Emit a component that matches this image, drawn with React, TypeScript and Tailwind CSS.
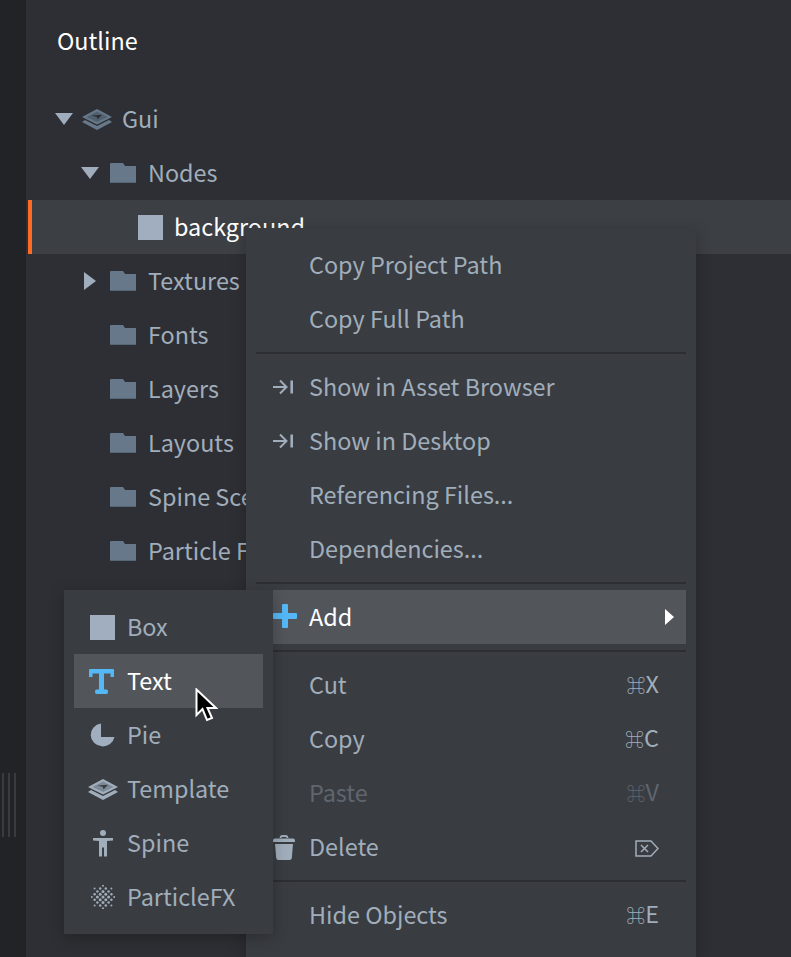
import React from "react";

const TEXT = "text-[#a0adba]";

const Layers = ({ color = "#a0aebc", dim = false }: { color?: string; dim?: boolean }) => (
  <svg width="30" height="21" viewBox="0 0 30 21" className="shrink-0">
    <path d="M15 0 L30 8 L15 15.5 L0 8 Z" fill={color} />
    <path d="M15 2.5 L25.5 8 L15 13 L4.5 8 Z" fill={dim ? "#50606f" : "#7d8997"} />
    <path d="M9.5 6.5 L20 5.8 L15.5 10.5 L14.8 8 Z" fill={dim ? "#2e2f34" : "#393c41"} />
    <path d="M3 11 L15 17 L27 11 L30 13 L15 21 L0 13 Z" fill={color} />
  </svg>
);

const Folder = () => (
  <svg width="26" height="20" viewBox="0 0 26 20" className="shrink-0">
    <path d="M0 1 Q0 0 1 0 H13 L15 3 H26 V20 H0 Z" fill="#66788a" />
    <path d="M0 19 H26 V20 H0 Z" fill="#566674" />
  </svg>
);

const Down = () => (
  <svg width="18" height="12" viewBox="0 0 18 12" className="shrink-0">
    <path d="M0 0 H18 L9 12 Z" fill="#9fadbd" />
  </svg>
);

const Right = () => (
  <svg width="12" height="18" viewBox="0 0 12 18" className="shrink-0">
    <path d="M0 0 L12 9 L0 18 Z" fill="#9fadbd" />
  </svg>
);

const ShowIn = () => (
  <svg width="20" height="16" viewBox="0 0 20 16" fill="none" stroke="#a0adba" strokeWidth="2" className="shrink-0">
    <path d="M0 8 H13 M7 1.5 L13.5 8 L7 14.5" />
    <path d="M18.7 1.5 V14.5" strokeWidth="2.6" />
  </svg>
);

const TreeRow = ({ indent, arrow, icon, label }: { indent: string; arrow?: React.ReactNode; icon: React.ReactNode; label: string }) => (
  <div className={`flex h-[54px] items-center ${indent}`}>
    <div className="flex w-[34px] shrink-0 items-center justify-center pr-[6px]">{arrow}</div>
    <div className="flex w-[26px] shrink-0 justify-center">{icon}</div>
    <span className={`mb-[2px] ml-[12px] whitespace-nowrap ${TEXT}`}>{label}</span>
  </div>
);

const Shortcut = ({ k }: { k: string }) => (
  <>
    <span className="text-[19px]">⌘</span>
    {k}
  </>
);

const MenuRow = ({
  icon,
  label,
  shortcut,
  dim,
}: {
  icon?: React.ReactNode;
  label: string;
  shortcut?: React.ReactNode;
  dim?: boolean;
}) => (
  <div className={`flex h-[54px] items-center ${dim ? "text-[#5f666e]" : TEXT}`}>
    <div className="flex w-[63px] shrink-0 items-center pl-[27px]">{icon}</div>
    <span className="mb-[2px]">{label}</span>
    <span className="mb-[2px] ml-auto pr-[37px]">{shortcut}</span>
  </div>
);

const Divider = () => <div className="mx-[10px] my-[6px] h-[2px] bg-[#2c2e32]" />;

const SubRow = ({ icon, label, active }: { icon: React.ReactNode; label: string; active?: boolean }) => (
  <div className={`mx-[10px] flex h-[54px] items-center ${active ? "bg-[#52565b] text-white" : TEXT}`}>
    <div className="flex w-[53px] shrink-0 justify-center pr-[2px] pl-[6px]">{icon}</div>
    <span className="mb-[2px]">{label}</span>
  </div>
);

const particleDots: [number, number, number][] = [];
for (let r = -4; r <= 4; r++) {
  for (let c = -4; c <= 4; c++) {
    if ((r + c + 8) % 2 !== 0) continue;
    const d = Math.hypot(r, c);
    if (d > 4.3) continue;
    particleDots.push([12 + c * 2.8, 12 + r * 2.8, d < 2.5 ? 1.5 : d < 3.3 ? 1.25 : 1]);
  }
}

export default function App() {
  return (
    <div
      className="relative flex h-[957px] w-[791px] overflow-hidden bg-[#2e2f34] text-[23.4px] leading-[52px]"
      style={{ fontFamily: '"Noto Sans CJK SC", "Noto Sans", sans-serif' }}
    >
      {/* left strip */}
      <div className="relative w-[26px] shrink-0 bg-[#212327]">
        <div className="absolute top-[773px] left-[2px] flex h-[64px] gap-[4px]">
          <div className="w-[2px] bg-[#393b40]" />
          <div className="w-[2px] bg-[#393b40]" />
          <div className="w-[2px] bg-[#393b40]" />
        </div>
      </div>

      <div className="min-w-0 flex-1">
        <div className="pt-[14px] pb-[2px] pl-[31px] text-white">Outline</div>
        <div className="mt-[24px]">
          <TreeRow indent="pl-[24px]" arrow={<Down />} icon={<Layers color="#66788a" dim />} label="Gui" />
          <TreeRow indent="pl-[50px]" arrow={<Down />} icon={<Folder />} label="Nodes" />
          <div className="ml-[2px] flex h-[54px] items-center border-l-4 border-[#ff6b23] bg-[#3c3f44] pl-[106px]">
            <div className="h-[25px] w-[25px] bg-[#a0aebf]" />
            <span className="mb-[2px] ml-[11px] text-white">background</span>
          </div>
          <TreeRow indent="pl-[50px]" arrow={<Right />} icon={<Folder />} label="Textures" />
          <TreeRow indent="pl-[50px]" icon={<Folder />} label="Fonts" />
          <TreeRow indent="pl-[50px]" icon={<Folder />} label="Layers" />
          <TreeRow indent="pl-[50px]" icon={<Folder />} label="Layouts" />
          <TreeRow indent="pl-[50px]" icon={<Folder />} label="Spine Scenes" />
          <TreeRow indent="pl-[50px]" icon={<Folder />} label="Particle FX" />
        </div>
      </div>

      {/* context menu */}
      <div className="absolute top-[228px] bottom-0 left-[246px] w-[450px] bg-[#393c41] pt-[10px] shadow-[0_4px_14px_rgba(0,0,0,0.25)]">
        <MenuRow label="Copy Project Path" />
        <MenuRow label="Copy Full Path" />
        <Divider />
        <MenuRow icon={<ShowIn />} label="Show in Asset Browser" />
        <MenuRow icon={<ShowIn />} label="Show in Desktop" />
        <MenuRow label="Referencing Files..." />
        <MenuRow label="Dependencies..." />
        <Divider />
        <div className="mr-[10px] ml-[27px] flex h-[54px] items-center bg-[#52565b] text-white">
          <svg width="24" height="24" viewBox="0 0 24 24" className="mb-[2px] shrink-0">
            <path d="M9 1 Q9 0 10 0 H14 Q15 0 15 1 V9 H23 Q24 9 24 10 V14 Q24 15 23 15 H15 V23 Q15 24 14 24 H10 Q9 24 9 23 V15 H1 Q0 15 0 14 V10 Q0 9 1 9 H9 Z" fill="#54b8f7" />
          </svg>
          <span className="mb-[2px] ml-[12px]">Add</span>
          <svg width="9" height="16" viewBox="0 0 9 16" className="mr-[12px] ml-auto shrink-0">
            <path d="M0 0 L9 8 L0 16 Z" fill="#ffffff" />
          </svg>
        </div>
        <Divider />
        <MenuRow label="Cut" shortcut={<Shortcut k="X" />} />
        <MenuRow label="Copy" shortcut={<Shortcut k="C" />} />
        <MenuRow label="Paste" shortcut={<Shortcut k="V" />} dim />
        <MenuRow
          icon={
            <svg width="22" height="25" viewBox="0 0 22 25" className="shrink-0">
              <path d="M7.5 3 Q7.5 1 9.5 1 H12.5 Q14.5 1 14.5 3" fill="none" stroke="#a0adba" strokeWidth="1.8" />
              <path d="M2 3.5 H20 Q22 3.5 22 5.5 V7 H0 V5.5 Q0 3.5 2 3.5 Z" fill="#a0adba" />
              <path d="M2 9 H20 L18.8 23 Q18.6 25 16.6 25 H5.4 Q3.4 25 3.2 23 Z" fill="#a0adba" />
            </svg>
          }
          label="Delete"
          shortcut={
            <svg width="24" height="17" viewBox="0 0 24 17" fill="none" stroke="#a0adba" strokeWidth="1.5" className="mb-[-4px]">
              <path d="M1 1 H16 L23 8.5 L16 16 H1 Z" />
              <path d="M6 5 L13 12 M13 5 L6 12" />
            </svg>
          }
        />
        <Divider />
        <MenuRow label="Hide Objects" shortcut={<Shortcut k="E" />} />
      </div>

      {/* add submenu */}
      <div className="absolute top-[590px] left-[64px] w-[209px] bg-[#393c41] py-[10px] shadow-[0_4px_14px_rgba(0,0,0,0.25)]">
        <SubRow icon={<div className="h-[25px] w-[25px] bg-[#a0aebf]" />} label="Box" />
        <SubRow
          active
          icon={
            <svg width="25" height="25" viewBox="0 0 25 25" className="mr-[2px] shrink-0">
              <path d="M1 0 H24 Q25 0 25 1 V8 H21.5 V4.5 H15 V20.5 H17.5 Q19 20.5 19 22.5 Q19 25 17.5 25 H7.5 Q6 25 6 22.5 Q6 20.5 7.5 20.5 H10 V4.5 H3.5 V8 H0 V1 Q0 0 1 0 Z" fill="#54b8f7" />
            </svg>
          }
          label="Text"
        />
        <SubRow
          icon={
            <svg width="25" height="25" viewBox="0 0 25 25" className="shrink-0">
              <path d="M11 0.5 V14 H24.5 A12 11.5 0 1 1 11 0.5 Z" fill="#a0aebf" />
            </svg>
          }
          label="Pie"
        />
        <SubRow icon={<Layers />} label="Template" />
        <SubRow
          icon={
            <svg width="20" height="27" viewBox="0 0 20 27" className="shrink-0">
              <circle cx="10" cy="3" r="3" fill="#a0adba" />
              <path d="M0 8 H20 V10.5 L14 11 V26.5 H11 V17.5 H9 V26.5 H6 V11 L0 10.5 Z" fill="#a0adba" />
            </svg>
          }
          label="Spine"
        />
        <SubRow
          icon={
            <svg width="24" height="24" viewBox="0 0 24 24" className="shrink-0">
              {particleDots.map(([x, y, r]) => (
                <circle key={`${x}-${y}`} cx={x} cy={y} r={r} fill="#a0adba" />
              ))}
            </svg>
          }
          label="ParticleFX"
        />
      </div>

      {/* mouse pointer */}
      <svg width="24" height="36" viewBox="0 0 24 36" className="absolute top-[688px] left-[195px]">
        <path d="M1.5 1.5 V27 L7.5 21 L12 32 L17 30 L12.5 20 H21 Z" fill="#000000" stroke="#ffffff" strokeWidth="2" />
      </svg>
    </div>
  );
}
